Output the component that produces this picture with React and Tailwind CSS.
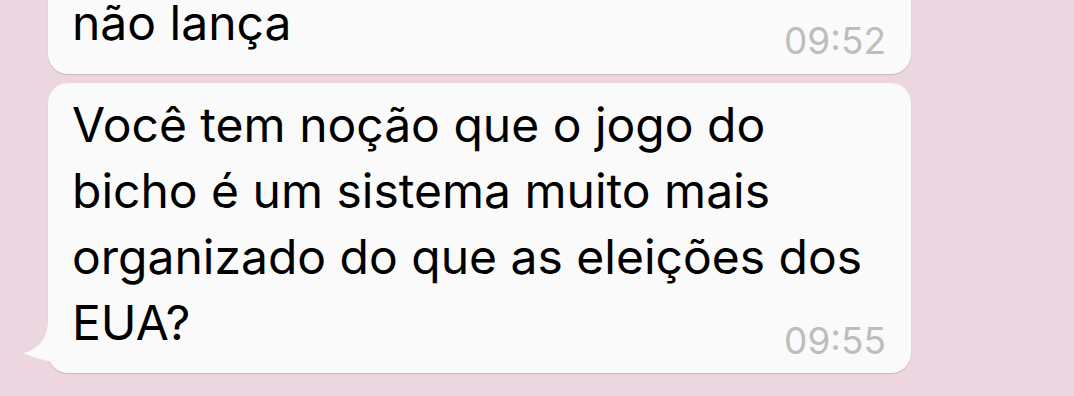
import React from "react";

function Tail() {
  return (
    <svg
      className="absolute left-[-26px] top-[236px]"
      width="30"
      height="43"
      viewBox="0 0 30 43"
    >
      <path
        d="M26 0 C26 18 18 30 1 34 C10 38 18 40 26 42 L30 42 L30 0 Z"
        fill="#fafafa"
      />
    </svg>
  );
}

export default function App() {
  const font = { fontFamily: "Inter, 'Noto Sans', sans-serif" };
  return (
    <div
      className="w-[1074px] h-[396px] overflow-hidden bg-[#ecd6e0]"
      style={font}
    >
      <div className="ml-[48px] w-[863px] flex flex-col gap-[9px] mt-[-22px]">
        <div className="relative rounded-[20px] bg-[#fafafa] shadow-[0_1px_1px_rgba(120,80,100,0.25)] pl-[24px] pr-[25px] pt-[12px] pb-[18px]">
          <div className="flex items-end justify-between">
            <span className="text-[48px] leading-[66px] text-black">não lança</span>
            <span className="text-[37px] leading-[37px] text-[#bdbdbd] mb-[-3px]">09:52</span>
          </div>
        </div>
        <div className="relative rounded-[20px] bg-[#fafafa] shadow-[0_1px_1px_rgba(120,80,100,0.25)] pl-[24px] pr-[25px] pt-[9px] pb-[17px]">
          <Tail />
          <div className="text-[48px] leading-[66px] text-black">
            <div>Você tem noção que o jogo do</div>
            <div>bicho é um sistema muito mais</div>
            <div>organizado do que as eleições dos</div>
            <div className="flex items-end justify-between">
              <span>EUA?</span>
              <span className="text-[37px] leading-[37px] text-[#bdbdbd] mb-[-3px]">09:55</span>
            </div>
          </div>
        </div>
      </div>
    </div>
  );
}
